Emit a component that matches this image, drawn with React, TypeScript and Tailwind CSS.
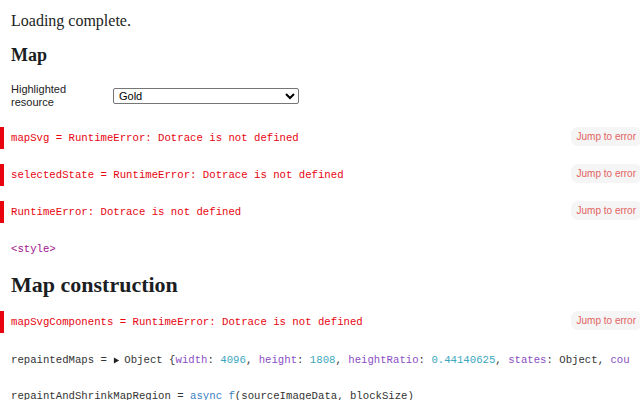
import type { ReactNode } from 'react';

const serif = 'font-["Liberation_Serif","Times_New_Roman",serif]';
const mono = 'font-["Liberation_Mono","DejaVu_Sans_Mono",monospace]';

function ErrorCell({ children }: { children: ReactNode }) {
  return (
    <div className="relative flex h-[22px] items-center">
      <div className="absolute left-0 top-0 h-full w-[4px] bg-[#e7040f]" />
      <span className={`${mono} pl-[11px] text-[10.67px] text-[#e7040f] whitespace-nowrap`}>{children}</span>
      <button
        type="button"
        className="mb-[3px] ml-auto mr-[-2px] rounded-[7px] bg-[#f5f5f5] px-[6px] py-[2px] font-['Liberation_Sans',sans-serif] text-[10px] text-[#e46262]"
      >
        Jump to error
      </button>
    </div>
  );
}

function CodeCell({ children }: { children: ReactNode }) {
  return (
    <div className={`${mono} h-[22px] overflow-hidden whitespace-pre pl-[11px] text-[10.67px] leading-[22px] text-[#333]`}>
      {children}
    </div>
  );
}

const k = 'text-[#8a4fc4]';
const n = 'text-[#3ba7bd]';

export default function App() {
  return (
    <div className="h-[400px] w-[640px] overflow-hidden bg-white">
      <div className={`${serif} pl-[11px] pt-[11px] text-[16px] leading-[20px] text-[#1b1e23]`}>Loading complete.</div>

      <h2 className={`${serif} mt-[13px] pl-[11px] text-[18px] font-bold leading-[22px] text-[#1b1e23]`}>Map</h2>

      <div className="mt-[17px] flex items-center pl-[11px] font-['Liberation_Sans',sans-serif] text-[11px] text-[#222]">
        <label className="w-[102px] leading-[13px]">
          Highlighted
          <br />
          resource
        </label>
        <select className="h-[16px] w-[186px] rounded-[2px] border border-[#767676] bg-white px-[1px] text-[11px] leading-none text-black">
          <option>Gold</option>
        </select>
      </div>

      <div className="mt-[18px] flex flex-col gap-[15px]">
        <ErrorCell>mapSvg = RuntimeError: Dotrace is not defined</ErrorCell>
        <ErrorCell>selectedState = RuntimeError: Dotrace is not defined</ErrorCell>
        <ErrorCell>RuntimeError: Dotrace is not defined</ErrorCell>
        <CodeCell>
          <span className="text-[#a0138f]">&lt;style&gt;</span>
        </CodeCell>
      </div>

      <h2 className={`${serif} mt-[11px] pl-[11px] text-[22px] font-bold leading-[28px] text-[#1b1e23]`}>
        Map construction
      </h2>

      <div className="mt-[12px] flex flex-col gap-[15px]">
        <ErrorCell>mapSvgComponents = RuntimeError: Dotrace is not defined</ErrorCell>
        <div className="flex flex-col gap-[14px] pt-[1px]">
          <CodeCell>
            {'repaintedMaps = '}
            <svg viewBox="0 0 8 8" className="mr-[4px] inline-block h-[7px] w-[7px]" aria-hidden>
              <path d="M1 0.5 L7 4 L1 7.5 Z" fill="#222" />
            </svg>
            {'Object {'}
            <span className={k}>width</span>{': '}<span className={n}>4096</span>{', '}
            <span className={k}>height</span>{': '}<span className={n}>1808</span>{', '}
            <span className={k}>heightRatio</span>{': '}<span className={n}>0.44140625</span>{', '}
            <span className={k}>states</span>{': Object, '}<span className={k}>cou</span>
          </CodeCell>
          <CodeCell>
            {'repaintAndShrinkMapRegion = '}
            <span className="text-[#3b7fc4]">async</span>{' '}
            <span className="text-[#3b7fc4]">f</span>{'(sourceImageData, blockSize)'}
          </CodeCell>
        </div>
      </div>
    </div>
  );
}
